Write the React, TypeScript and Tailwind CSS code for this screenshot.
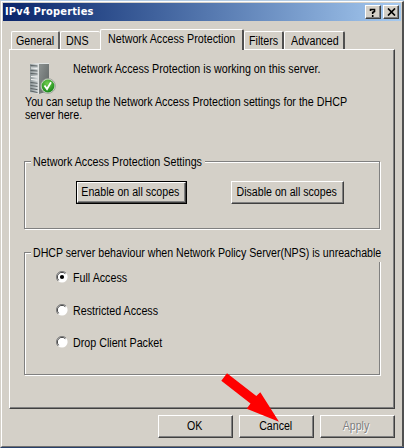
import type { ReactNode } from "react";

const raised =
  "bg-[#d4d0c8] border border-t-white border-l-white border-r-[#404040] border-b-[#404040] shadow-[inset_-1px_-1px_0_#808080]";

function Label({ children, className = "" }: { children: ReactNode; className?: string }) {
  return (
    <span className={`-mb-px block w-max whitespace-nowrap pt-px leading-[13px] origin-left scale-x-[0.892] ${className}`}>
      {children}
    </span>
  );
}

function Button({ children, className = "" }: { children: ReactNode; className?: string }) {
  return (
    <button className={`flex h-[23px] shrink-0 justify-center pt-[4px] pr-[2px] ${raised} ${className}`}>
      <span className="block whitespace-nowrap leading-[13px] scale-x-[0.885]">{children}</span>
    </button>
  );
}

function Tab({ children, className = "" }: { children: ReactNode; className?: string }) {
  return (
    <div className={`h-[18px] shrink-0 rounded-t-[2px] border-t border-l border-white pt-[2px] ${className}`}>
      <Label>{children}</Label>
    </div>
  );
}

function Radio({ children, checked = false, className = "" }: { children: ReactNode; checked?: boolean; className?: string }) {
  return (
    <div className={`flex h-[13px] items-start ${className}`}>
      <svg width="12" height="12" viewBox="0 0 12 12" className="mr-[5px] shrink-0">
        <circle cx="6" cy="6" r="5.6" fill="#fff" />
        <path d="M2 10A5.5 5.5 0 0 1 10 2" fill="none" stroke="#808080" />
        <path d="M2.7 9.3A4.6 4.6 0 0 1 9.3 2.7" fill="none" stroke="#404040" />
        {checked && <circle cx="6" cy="6" r="2.1" fill="#000" />}
      </svg>
      <Label>{children}</Label>
    </div>
  );
}

function ServerIcon() {
  return (
    <svg width="26" height="32" viewBox="0 0 26 32" className="mt-px shrink-0">
      <defs>
        <linearGradient id="side" x1="0" x2="1" y1="0" y2="1">
          <stop offset="0" stopColor="#8d9392" />
          <stop offset="1" stopColor="#5c6261" />
        </linearGradient>
        <linearGradient id="front" x1="0" x2="1" y1="0" y2="0">
          <stop offset="0" stopColor="#8b9496" />
          <stop offset="1" stopColor="#d3d8d9" />
        </linearGradient>
        <radialGradient id="ok" cx=".45" cy=".3" r=".7">
          <stop offset="0" stopColor="#72cc50" />
          <stop offset="1" stopColor="#168817" />
        </radialGradient>
      </defs>
      <path d="M0 1L8 0H19V29L9 31L0 29Z" fill="#e1e4e3" />
      <path d="M9 1H19V28L9 31Z" fill="url(#side)" />
      <path d="M0 1L8 1.5V30.5L0 29Z" fill="url(#front)" />
      <path d="M.5 2.5L7.5 3M.5 7.5L7.5 8M.5 10.5L7.5 11M.5 19.5L7.5 20.3M.5 22.5L7.5 23.4M.5 25.5L7.5 26.6M.5 28L7.5 29.5" stroke="#596163" fill="none" />
      <path d="M1 5L7.5 5.5M1 13.5L7.5 14M1 16.5L7.5 17.2" stroke="#f1f3f2" fill="none" />
      <circle cx="18" cy="23" r="7.4" fill="#d9dfd6" stroke="#8f968d" strokeWidth=".8" />
      <circle cx="18" cy="23" r="6.4" fill="url(#ok)" />
      <path d="M14.5 22.5L17 26L21 19.2" fill="none" stroke="#fff" strokeWidth="1.8" />
    </svg>
  );
}

export default function App() {
  return (
    <div
      className="relative flex h-[448px] w-[404px] flex-col overflow-hidden border-t border-b border-l border-t-[#b4cce4] border-b-[#28406a] border-l-[#d4d0c8] bg-[#d4d0c8] text-[12px] text-black"
      style={{ fontFamily: '"Liberation Sans", Arial, sans-serif' }}
    >
      <div className="flex h-[446px] flex-col border-t border-r-2 border-b border-l border-t-white border-r-[#505050] border-b-[#707070] border-l-white">
        <header className="ml-px mt-px mr-px flex h-[18px] shrink-0 items-start bg-linear-to-r from-[#0a246a] to-[#a6caf0] pl-[2px]">
          <h1
            className="grow whitespace-nowrap pt-[2px] text-[11px] leading-[14px] font-bold tracking-[0.17px] text-white"
            style={{ fontFamily: '"DejaVu Sans Condensed", "DejaVu Sans", sans-serif' }}
          >
            IPv4 Properties
          </h1>
          <button className={`mt-[2px] mr-[2px] flex h-[14px] w-[16px] items-center justify-center ${raised}`}>
            <svg width="8" height="9" viewBox="0 0 8 9">
              <path d="M1.5 3V1.5H5.5V3.5L3.7 4.5V6M3.7 7V9" fill="none" stroke="#000" strokeWidth="1.6" />
            </svg>
          </button>
          <button className={`mt-[2px] mr-[2px] flex h-[14px] w-[16px] items-center justify-center ${raised}`}>
            <svg width="9" height="8" viewBox="0 0 9 8">
              <path d="M1 .5L8 7.5M8 .5L1 7.5" fill="none" stroke="#000" strokeWidth="1.7" />
            </svg>
          </button>
        </header>

        <nav className="mt-[8px] ml-[9px] flex h-[20px] shrink-0 items-end">
          <Tab className="w-[49px] border-r-2 border-r-[#606060] pl-[4px]">General</Tab>
          <Tab className="w-[40px] pl-[5px]">DNS</Tab>
          <div className="z-10 -mb-px h-[21px] w-[144px] shrink-0 rounded-t-[2px] border-t border-r-2 border-l border-t-white border-r-[#505050] border-l-white bg-[#d4d0c8] pt-[2px] pl-[7px]">
            <Label>Network Access Protection</Label>
          </div>
          <Tab className="w-[40px] border-r-2 border-r-[#505050] pl-[4px]">Filters</Tab>
          <Tab className="w-[61px] border-r-2 border-r-[#505050] pl-[6px]">Advanced</Tab>
        </nav>

        <main className={`ml-[7px] h-[360px] w-[386px] shrink-0 px-[14px] ${raised}`}>
          <div className="flex h-[45px] items-start pt-[12px] pl-[6px]">
            <ServerIcon />
            <Label className="ml-[17px]">Network Access Protection is working on this server.</Label>
          </div>
          <div className="ml-px h-[66px]">
            <Label>You can setup the Network Access Protection settings for the DHCP</Label>
            <Label>server here.</Label>
          </div>

          <section className="h-[68px] w-[356px] border border-[#808080] shadow-[inset_1px_1px_0_#fff,1px_1px_0_#fff]">
            <div className="-mt-[7px] ml-[6px] h-[13px] w-[174px] bg-[#d4d0c8] pl-[2px]">
              <Label>Network Access Protection Settings</Label>
            </div>
            <div className="mt-[13px] ml-[51px] flex gap-[44px]">
              <div className="border border-black">
                <Button className="!h-[21px] w-[109px] !pt-[3px]">Enable on all scopes</Button>
              </div>
              <Button className="w-[113px]">Disable on all scopes</Button>
            </div>
          </section>

          <section className="mt-[23px] h-[123px] w-[356px] border border-[#808080] shadow-[inset_1px_1px_0_#fff,1px_1px_0_#fff]">
            <div className="-mt-[7px] ml-[6px] h-[16px] w-[351px] bg-[#d4d0c8] pl-[2px]">
              <Label className="!scale-x-[0.884]">DHCP server behaviour when Network Policy Server(NPS) is unreachable</Label>
            </div>
            <div className="mt-[9px] ml-[31px] flex flex-col">
              <Radio checked>Full Access</Radio>
              <Radio className="mt-[20px]">Restricted Access</Radio>
              <Radio className="mt-[19px]">Drop Client Packet</Radio>
            </div>
          </section>
        </main>

        <footer className="mt-[6px] ml-[156px] flex gap-[6px]">
          <Button className="w-[75px]">OK</Button>
          <Button className="w-[75px]">Cancel</Button>
          <Button className="w-[75px] text-[#808080] [text-shadow:1px_1px_0_#fff]">Apply</Button>
        </footer>
      </div>

      <svg className="pointer-events-none absolute top-[371px] left-[219px]" width="64" height="54" viewBox="220 372 64 54">
        <path d="M227 373.3L221.3 380.7L250.5 403.5L246.7 408.7L279 421.7L260.3 392.3L256.3 396Z" fill="#f00" />
      </svg>
    </div>
  );
}
